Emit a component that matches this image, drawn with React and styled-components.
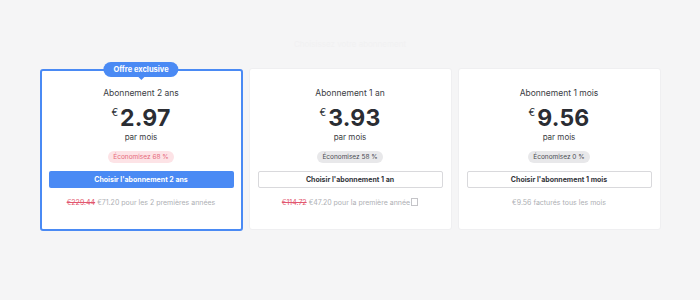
import styled, { createGlobalStyle } from 'styled-components'

const GlobalStyle = createGlobalStyle`
  body {
    margin: 0;
    background: #f5f5f6;
    font-family: Inter, "Noto Sans", Arial, sans-serif;
  }
`

const Page = styled.div`
  width: 700px;
  height: 300px;
  display: flex;
  flex-direction: column;
  align-items: center;
  padding-top: 38px;
  box-sizing: border-box;
`

const Heading = styled.div`
  font-size: 8px;
  line-height: 12px;
  color: #f1f1f2;
  height: 12px;
  margin-bottom: 18px;
`

const Row = styled.div`
  display: flex;
  gap: 6px;
`

const Card = styled.div`
  position: relative;
  width: 203px;
  height: 162px;
  box-sizing: border-box;
  background: #fff;
  border: ${p => (p.$featured ? '2px solid #4a8af4' : '1px solid #efeff1')};
  border-radius: 3px;
  padding: ${p => (p.$featured ? '16px 7px 0' : '18px 8px 0')};
  margin-top: ${p => (p.$featured ? '1px' : '0')};
  display: flex;
  flex-direction: column;
  align-items: center;
`

const Badge = styled.div`
  position: absolute;
  top: -9px;
  left: 50%;
  transform: translateX(-50%);
  background: #4a8af4;
  color: #fff;
  font-size: 7.5px;
  font-weight: 700;
  line-height: 15px;
  height: 15px;
  padding: 0 10px;
  border-radius: 8px;
  white-space: nowrap;

  &::after {
    content: "";
    position: absolute;
    left: 50%;
    bottom: -3px;
    margin-left: -3px;
    border-left: 3px solid transparent;
    border-right: 3px solid transparent;
    border-top: 3px solid #4a8af4;
  }
`

const Title = styled.div`
  font-size: 8.5px;
  line-height: 12px;
  color: #3b3d44;
`

const PriceRow = styled.div`
  display: flex;
  align-items: flex-start;
  margin-top: 7px;
  color: #2b2d33;
`

const Currency = styled.span`
  font-size: 10px;
  line-height: 12px;
  margin-right: 2px;
  margin-top: 0;
`

const Amount = styled.span`
  font-size: 23px;
  font-weight: 700;
  line-height: 24px;
  letter-spacing: 0.2px;
`

const PerMonth = styled.div`
  margin-top: 2px;
  font-size: 8px;
  line-height: 11px;
  color: #3b3d44;
`

const Pill = styled.div`
  margin-top: 8px;
  height: 12px;
  line-height: 12px;
  padding: 0 5px;
  border-radius: 6px;
  font-size: 6.5px;
  background: ${p => (p.$pink ? '#fde3e6' : '#e8e8ea')};
  color: ${p => (p.$pink ? '#e66a7a' : '#4a4c52')};
`

const Button = styled.div`
  margin-top: 8px;
  width: 100%;
  height: 17px;
  box-sizing: border-box;
  border-radius: 2px;
  display: flex;
  align-items: center;
  justify-content: center;
  font-size: 7px;
  font-weight: 700;
  background: ${p => (p.$primary ? '#4a8af4' : '#fff')};
  color: ${p => (p.$primary ? '#fff' : '#33353b')};
  border: ${p => (p.$primary ? 'none' : '1px solid #d9d9dc')};
`

const Footer = styled.div`
  margin-top: 9px;
  font-size: 7px;
  line-height: 12px;
  color: #aeafb4;
  white-space: nowrap;
`

const Old = styled.span`
  color: #e2566e;
  text-decoration: line-through;
  margin-right: 2px;
`

const Mark = styled.span`
  display: inline-block;
  width: 5px;
  height: 6px;
  margin-left: 1px;
  border: 1px solid #c4c4c8;
  vertical-align: -1px;
`

const plans = [
  {
    title: 'Abonnement 2 ans',
    price: '2.97',
    save: 'Économisez 68 %',
    button: "Choisir l'abonnement 2 ans",
    old: '€229.44',
    note: '€71.20 pour les 2 premières années',
    featured: true,
  },
  {
    title: 'Abonnement 1 an',
    price: '3.93',
    save: 'Économisez 58 %',
    button: "Choisir l'abonnement 1 an",
    old: '€114.72',
    note: '€47.20 pour la première année',
    mark: true,
  },
  {
    title: 'Abonnement 1 mois',
    price: '9.56',
    save: 'Économisez 0 %',
    button: "Choisir l'abonnement 1 mois",
    note: '€9.56 facturés tous les mois',
  },
]

const App = () => (
  <>
    <GlobalStyle />
    <Page>
      <Heading>Choisissez votre abonnement</Heading>
      <Row>
        {plans.map(plan => (
          <Card key={plan.title} $featured={plan.featured}>
            {plan.featured && <Badge>Offre exclusive</Badge>}
            <Title>{plan.title}</Title>
            <PriceRow>
              <Currency>€</Currency>
              <Amount>{plan.price}</Amount>
            </PriceRow>
            <PerMonth>par mois</PerMonth>
            <Pill $pink={plan.featured}>{plan.save}</Pill>
            <Button $primary={plan.featured}>{plan.button}</Button>
            <Footer>
              {plan.old && <Old>{plan.old}</Old>}
              {plan.note}
              {plan.mark && <Mark />}
            </Footer>
          </Card>
        ))}
      </Row>
    </Page>
  </>
)

export default App
